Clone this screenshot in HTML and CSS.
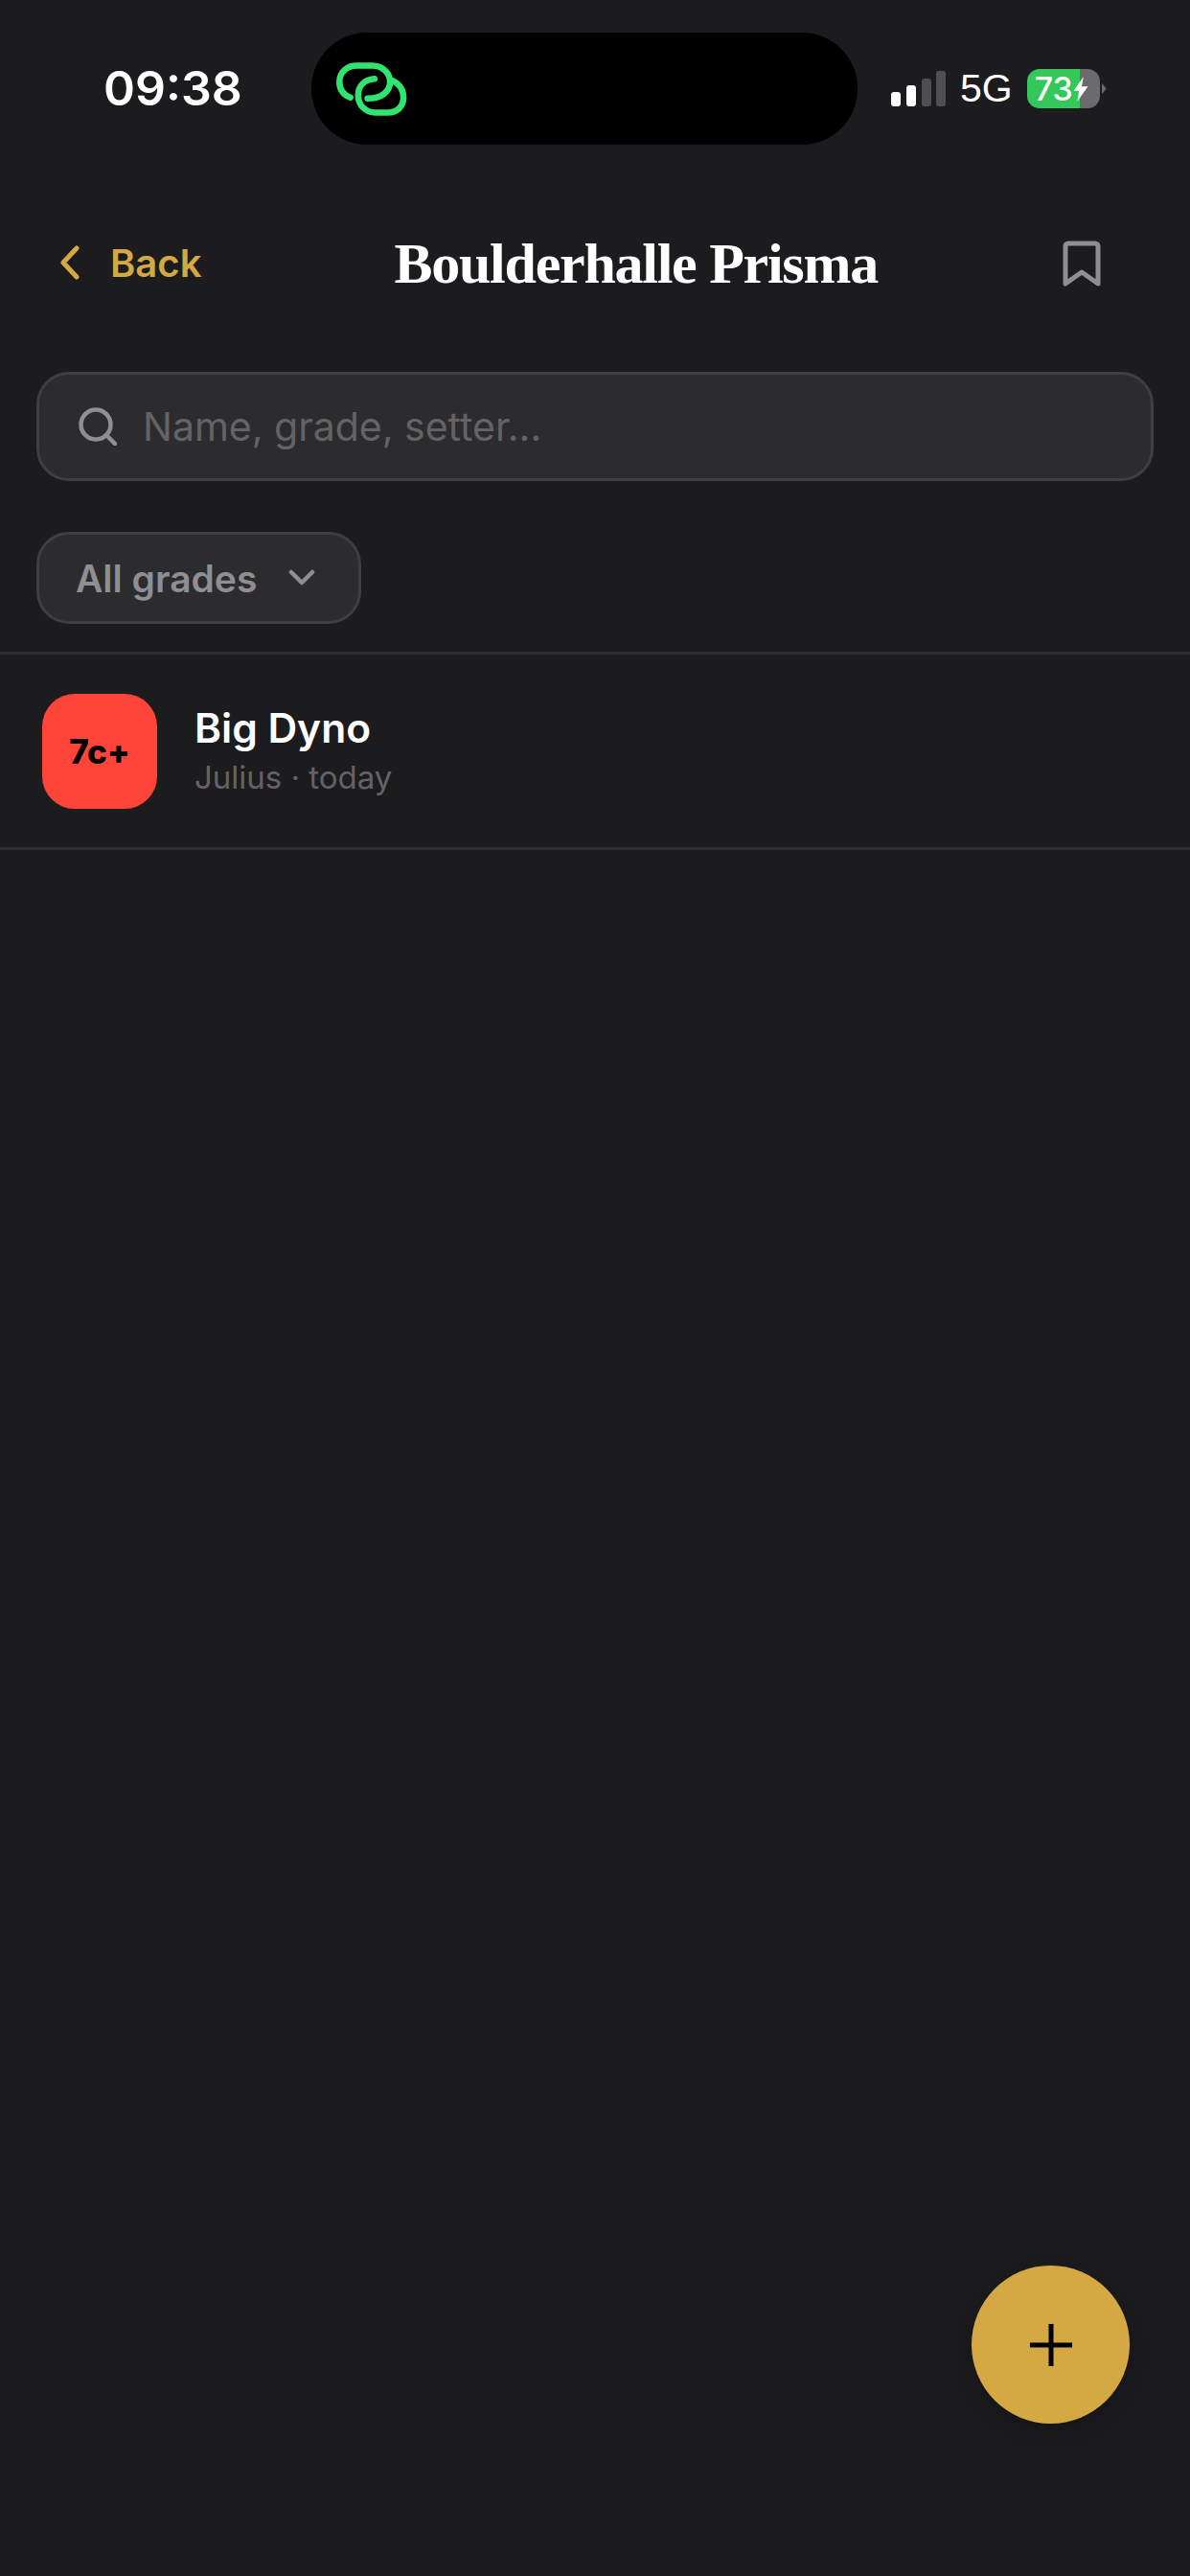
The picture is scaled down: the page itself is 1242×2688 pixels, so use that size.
FILE: index.html

```html
<!DOCTYPE html>
<html lang="en">
<head>
  <meta charset="UTF-8" />
  <meta name="viewport" content="width=device-width, initial-scale=1.0"/>
  <title>Boulderhalle Prisma</title>
  <link rel="stylesheet" href="styles.css">
</head>
<body>
  <div class="status-bar">
    <div class="time">09:38</div>
    <div class="island">
      <svg class="link-icon" viewBox="90 115 230 180" fill="none" stroke="#30e46f" stroke-width="20" stroke-linecap="round">
        <path d="M135 232C110 222 100 205 100 182C100 150 125 130 155 130H205C240 130 262 155 262 182C262 212 235 235 190 235"/>
        <path d="M212 172C180 175 160 195 160 225C160 258 185 280 215 280H255C285 280 305 260 305 232C305 205 290 188 270 178"/>
      </svg>
    </div>
    <div class="status-right">
      <svg class="signal" viewBox="0 0 57 37">
        <rect x="0" y="22" width="10" height="15" rx="3" fill="#fff"/>
        <rect x="16" y="15" width="10" height="22" rx="3" fill="#fff"/>
        <rect x="32" y="8" width="10" height="29" rx="3" fill="#4f4f51"/>
        <rect x="47" y="0" width="10" height="37" rx="3" fill="#4f4f51"/>
      </svg>
      <span class="network">5G</span>
      <div class="battery">
        <span class="battery-level">73</span>
        <svg class="bolt" viewBox="0 0 16 28"><path d="M11 0 0 16h6L4 28l12-17H9z" fill="#fff"/></svg>
      </div>
      <div class="battery-nub"></div>
    </div>
  </div>

  <div class="nav">
    <a class="back">
      <svg class="back-icon" viewBox="0 0 22 36" fill="none" stroke="#d4a843" stroke-width="5" stroke-linecap="round" stroke-linejoin="round"><path d="M18 3 4 18l14 15"/></svg>
      Back
    </a>
    <h1>Boulderhalle Prisma</h1>
    <svg class="bookmark" viewBox="0 0 40 48" fill="none" stroke="#8e8e93" stroke-width="5" stroke-linejoin="round"><path d="M3 45V6a3 3 0 0 1 3-3h28a3 3 0 0 1 3 3v39L20 33z"/></svg>
  </div>

  <div class="search">
    <svg class="search-icon" viewBox="0 0 40 40" fill="none" stroke="#8e8e93" stroke-width="4.5" stroke-linecap="round"><circle cx="18" cy="18" r="15.5"/><path d="m29 29 9 9"/></svg>
    <span class="placeholder">Name, grade, setter...</span>
  </div>

  <div class="filters">
    <div class="filter">
      All grades
      <svg class="filter-chevron" viewBox="0 0 28 18" fill="none" stroke="#8e8e93" stroke-width="4.5" stroke-linecap="round" stroke-linejoin="round"><path d="m3 3 11 11L25 3"/></svg>
    </div>
  </div>

  <div class="route">
    <div class="grade">7c+</div>
    <div class="route-info">
      <div class="route-name">Big Dyno</div>
      <div class="route-meta">Julius · today</div>
    </div>
  </div>

  <button class="fab" type="button">
    <svg viewBox="0 0 44 44" stroke="#000" stroke-width="5"><path d="M0 22h44M22 0v44"/></svg>
  </button>
</body>
</html>
```

FILE: styles.css

```css
* {
  box-sizing: border-box;
}

html, body {
  height: 100%;
}

body {
  margin: 0;
  background-color: #1c1c1e;
  color: #fff;
  font-family: Inter, "Liberation Sans", sans-serif;
  overflow: hidden;
}

.status-bar {
  display: flex;
  align-items: flex-start;
  height: 209px;
  padding: 34px 0 0 108px;
}

.time {
  width: 217px;
  height: 117px;
  line-height: 116px;
  font-size: 50px;
  font-weight: 600;
}

.island {
  display: flex;
  align-items: center;
  width: 570px;
  height: 117px;
  padding-left: 26px;
  background: #000;
  border-radius: 58px;
}

.link-icon {
  width: 75px;
  height: 60px;
}

.status-right {
  display: flex;
  align-items: center;
  height: 117px;
  padding-left: 35px;
}

.signal {
  width: 57px;
  height: 37px;
}

.network {
  margin-left: 15px;
  font-size: 41px;
  font-family: "Liberation Sans", sans-serif;
}

.battery {
  display: flex;
  align-items: center;
  width: 76px;
  height: 41px;
  margin-left: 15px;
  padding-left: 8px;
  border-radius: 13px;
  background: linear-gradient(to right, #34c759 73%, #6b6b6d 73%);
}

.battery-level {
  font-size: 34px;
  font-weight: 500;
}

.bolt {
  width: 16px;
  height: 26px;
}

.battery-nub {
  width: 5px;
  height: 12px;
  margin-left: 2px;
  background: #6b6b6d;
  clip-path: polygon(0 0, 100% 50%, 0 100%);
}

.nav {
  display: flex;
  align-items: center;
  justify-content: space-between;
  height: 132px;
  padding: 0 93px 0 62px;
}

.back {
  display: flex;
  align-items: center;
  gap: 31px;
  margin-top: -2px;
  color: #d4a843;
  font-size: 40px;
  font-weight: 600;
}

.back-icon {
  width: 22px;
  height: 36px;
}

h1 {
  margin: 0 0 0 8px;
  font-family: "Liberation Serif", serif;
  font-size: 60px;
  font-weight: 700;
  letter-spacing: -1.26px;
}

.bookmark {
  width: 40px;
  height: 48px;
}

.search {
  display: flex;
  align-items: center;
  gap: 27px;
  height: 114px;
  margin: 47px 38px 0;
  padding: 0 41px;
  background: #2c2c2e;
  border: 3px solid #3f3f41;
  border-radius: 34px;
}

.search-icon {
  width: 40px;
  height: 40px;
}

.placeholder {
  color: #636366;
  font-size: 41px;
}

.filters {
  padding: 53px 38px 29px;
  border-bottom: 3px solid #2f2f31;
}

.filter {
  display: inline-flex;
  align-items: center;
  gap: 33px;
  height: 96px;
  padding: 0 45px 0 38px;
  background: #2c2c2e;
  border: 3px solid #3f3f41;
  border-radius: 34px;
  color: #8e8e93;
  font-size: 39px;
  font-weight: 600;
  vertical-align: top;
}

.filter-chevron {
  width: 28px;
  height: 18px;
}

.route {
  display: flex;
  align-items: center;
  gap: 39px;
  height: 204px;
  padding-left: 44px;
  border-bottom: 3px solid #2f2f31;
}

.grade {
  display: flex;
  align-items: center;
  justify-content: center;
  width: 120px;
  height: 120px;
  background: #ff453a;
  border-radius: 34px;
  color: #000;
  font-size: 35px;
  font-weight: 800;
}

.route-name {
  font-size: 42.5px;
  font-weight: 600;
  line-height: 50px;
}

.route-meta {
  margin-top: 4px;
  color: #636366;
  font-size: 33px;
  line-height: 44px;
}

.fab {
  position: fixed;
  right: 63px;
  bottom: 159px;
  display: flex;
  align-items: center;
  justify-content: center;
  width: 165px;
  height: 165px;
  padding: 0;
  background: #d4a843;
  border: none;
  border-radius: 50%;
  box-shadow: 0 8px 30px rgba(0, 0, 0, 0.3);
}

.fab svg {
  width: 44px;
  height: 44px;
}
```
